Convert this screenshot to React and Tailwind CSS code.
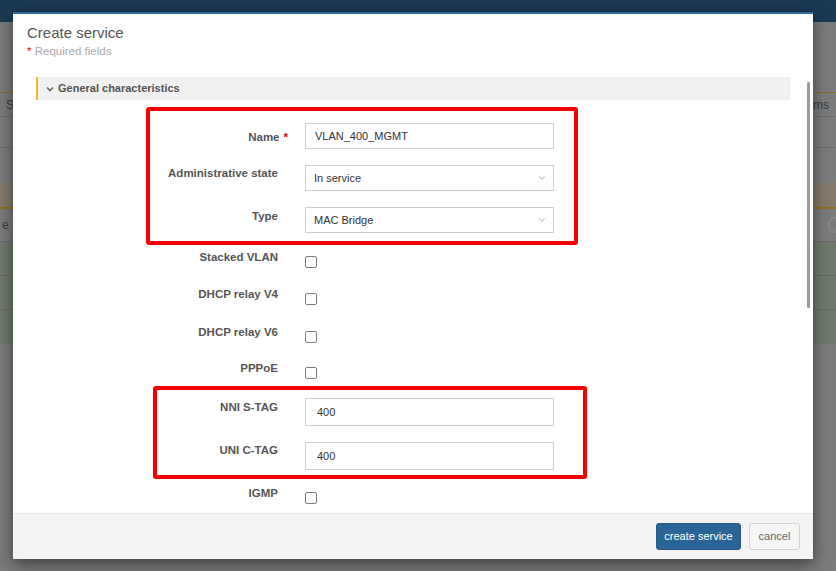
import { ChevronDown } from "lucide-react";

const Row = ({ label, required, labelClass = "", className = "", children }) => (
  <div className={`flex items-start ${className}`}>
    <label
      className={`w-[242px] shrink-0 text-right text-[11.5px] font-bold leading-[14px] text-[#555] ${labelClass}`}
    >
      {label}
      {required && <span className="ml-[4px] -mr-[10px] text-[#e00000]">*</span>}
    </label>
    <div className="ml-[27px] w-[249px]">{children}</div>
  </div>
);

const TextInput = ({ value, className = "" }) => (
  <input
    readOnly
    value={value}
    className={`block w-full border border-[#cfcfcf] bg-white px-[9px] text-[11px] text-[#333] outline-none ${className}`}
  />
);

const SelectBox = ({ value }) => (
  <div className="flex h-[26px] w-full items-center justify-between border border-[#cfcfcf] bg-white pl-[8px] pr-[6px] text-[11px] text-[#333]">
    <span>{value}</span>
    <ChevronDown size={10} strokeWidth={1.6} className="text-[#777]" />
  </div>
);

const Check = () => (
  <input
    type="checkbox"
    className="mt-[6px] block h-[12px] w-[12px] appearance-none rounded-[2px] border border-[#7a7a7a] bg-white"
  />
);

const Backdrop = () => (
  <div className="flex flex-col text-[12px] text-[#3c3c3c]">
    <div className="h-[22px] bg-[#1b3955]" />
    <div className="h-[70px]" />
    <div className="h-px bg-[#8b6c2c]" />
    <div className="flex h-[24px] items-center justify-between border-b border-[#6c6c6c] pl-[6px] pr-[7px]">
      <span>S</span>
      <span>ms</span>
    </div>
    <div className="h-[31px] border-b border-[#6c6c6c]" />
    <div className="h-[35px]" />
    <div className="h-[24px] bg-[#857a6b]" />
    <div className="h-[2px] bg-[#94701f]" />
    <div className="flex h-[33px] items-center justify-between border-b border-[#6c6c6c] pl-[2px]">
      <span>e</span>
      <span className="-mr-[8px] h-[16px] w-[16px] rounded-full border border-[#909090]" />
    </div>
    <div className="h-[34px] border-b border-[#656e62] bg-[#6f7a6c]" />
    <div className="h-[34px] border-b border-[#656e62] bg-[#6f7a6c]" />
    <div className="h-[34px] bg-[#6f7a6c]" />
  </div>
);

export default function App() {
  return (
    <div className="relative h-[571px] w-[836px] overflow-hidden bg-[#7b7b7b] font-['Liberation_Sans',Arial,sans-serif]">
      <Backdrop />

      {/* modal */}
      <div className="absolute left-[13px] top-[12px] flex h-[547px] w-[800px] flex-col border-t-2 border-[#2f6ca1] bg-white shadow-[0_5px_15px_rgba(0,0,0,0.5)]">
        <div className="h-[44px] shrink-0 px-[14px] pt-[10px]">
          <h4 className="text-[15px] leading-[18px] text-[#555]">Create service</h4>
          <p className="mt-[2px] text-[11.5px] leading-[14px] text-[#aaa]">
            <span className="text-[#e00000]">*</span> Required fields
          </p>
        </div>

        <div className="flex min-h-0 flex-1 overflow-hidden">
          <div className="ml-[23px] flex-1">
            <div className="mt-[19px] flex h-[23px] items-center border-l-2 border-[#f2b134] bg-[#f1f1f1] pl-[8px] text-[11px] font-bold text-[#555]">
              <svg width="8" height="6" viewBox="0 0 8 6" className="mr-[4px]">
                <path d="M1 1.5 L4 4.5 L7 1.5" fill="none" stroke="#666" strokeWidth="1.6" />
              </svg>
              General characteristics
            </div>

            <div className="relative mt-[23px]">
              <div className="pointer-events-none absolute -top-[16px] -bottom-[12px] left-[110px] right-[212px] rounded-[3px] border-4 border-[#f40000]" />
              <Row label="Name" required labelClass="pt-[7px]">
                <TextInput value="VLAN_400_MGMT" className="h-[26px]" />
              </Row>
              <Row label="Administrative state" labelClass="pt-[1px]" className="mt-[16px]">
                <SelectBox value="In service" />
              </Row>
              <Row label="Type" labelClass="pt-[2px]" className="mt-[16px]">
                <SelectBox value="MAC Bridge" />
              </Row>
            </div>

            <Row label="Stacked VLAN" className="mt-[17px]">
              <Check />
            </Row>
            <Row label="DHCP relay V4" className="mt-[19px]">
              <Check />
            </Row>
            <Row label="DHCP relay V6" className="mt-[20px]">
              <Check />
            </Row>
            <Row label="PPPoE" className="mt-[18px]">
              <Check />
            </Row>

            <div className="relative mt-[19px]">
              <div className="pointer-events-none absolute -top-[12px] -bottom-[9px] left-[117px] right-[203px] rounded-[3px] border-4 border-[#f40000]" />
              <Row label="NNI S-TAG" labelClass="pt-[2px]">
                <TextInput value="400" className="h-[28px] px-[11px]" />
              </Row>
              <Row label="UNI C-TAG" labelClass="pt-[1px]" className="mt-[16px]">
                <TextInput value="400" className="h-[28px] px-[11px]" />
              </Row>
            </div>

            <Row label="IGMP" className="mt-[16px]">
              <Check />
            </Row>
          </div>

          <div className="ml-[17px] mr-[3px] w-[3px]">
            <div className="mt-[24px] h-[226px] rounded-full bg-[#9b9b9b]" />
          </div>
        </div>

        <div className="flex h-[46px] shrink-0 items-center justify-end gap-[8px] border-t border-[#e5e5e5] bg-[#f4f4f4] pr-[13px]">
          <button className="h-[27px] w-[85px] rounded-[3px] border border-[#245a87] bg-[#2b6597] text-[11px] text-white">
            create service
          </button>
          <button className="h-[27px] w-[51px] rounded-[3px] border border-[#d2d2d2] bg-[#f6f6f6] text-[11px] text-[#666]">
            cancel
          </button>
        </div>
      </div>
    </div>
  );
}
